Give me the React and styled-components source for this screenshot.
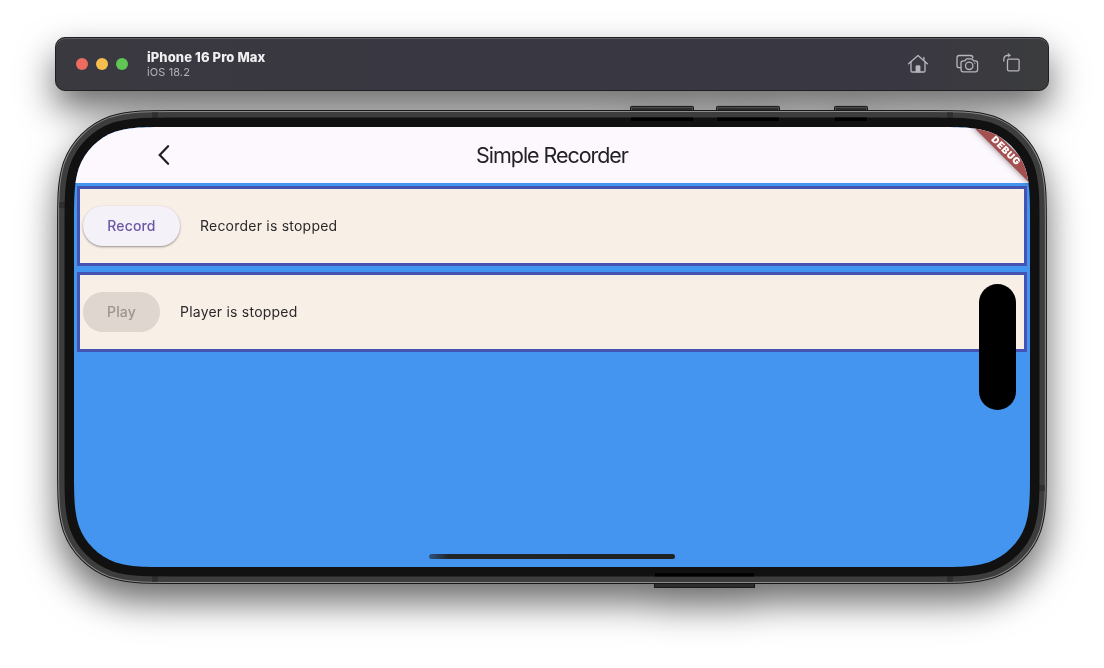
import React from "react";
import styled, { createGlobalStyle } from "styled-components";

const GlobalStyle = createGlobalStyle`
  * { box-sizing: border-box; }
  body {
    margin: 0;
    background: #fff;
    overflow: hidden;
    font-family: Inter, "Liberation Sans", sans-serif;
  }
`;

// Rounded rectangle with continuous-curvature corners.
const smoothRect = (x, y, w, h, r) => {
  const k = [1.528665, 1.08849296, 0.86840694, 0.63149379, 0.37282383, 0.16905956, 0.07491139].map((n) => n * r);
  const [a, b, c, d, e, f, g] = k;
  const R = x + w;
  const B = y + h;
  return [
    `M${x + a} ${y}`,
    `L${R - a} ${y}`,
    `C${R - b} ${y} ${R - c} ${y} ${R - d} ${y + g}`,
    `C${R - e} ${y + f} ${R - f} ${y + e} ${R - g} ${y + d}`,
    `C${R} ${y + c} ${R} ${y + b} ${R} ${y + a}`,
    `L${R} ${B - a}`,
    `C${R} ${B - b} ${R} ${B - c} ${R - g} ${B - d}`,
    `C${R - f} ${B - e} ${R - e} ${B - f} ${R - d} ${B - g}`,
    `C${R - c} ${B} ${R - b} ${B} ${R - a} ${B}`,
    `L${x + a} ${B}`,
    `C${x + b} ${B} ${x + c} ${B} ${x + d} ${B - g}`,
    `C${x + e} ${B - f} ${x + f} ${B - e} ${x + g} ${B - d}`,
    `C${x} ${B - c} ${x} ${B - b} ${x} ${B - a}`,
    `L${x} ${y + a}`,
    `C${x} ${y + b} ${x} ${y + c} ${x + g} ${y + d}`,
    `C${x + f} ${y + e} ${x + e} ${y + f} ${x + d} ${y + g}`,
    `C${x + c} ${y} ${x + b} ${y} ${x + a} ${y}Z`,
  ].join("");
};

const SCREEN_RADIUS = 65;

const Desktop = styled.main`
  width: 1104px;
  height: 668px;
  padding: 37px 55px 0;
  overflow: hidden;
`;

const SimulatorWindow = styled.div`
  display: flex;
  flex-direction: column;
  align-items: center;
  gap: 19px;
  filter: drop-shadow(0 18px 18px rgba(0, 0, 0, 0.59));
`;

const TitleBar = styled.header`
  display: flex;
  align-items: center;
  width: 994px;
  height: 54px;
  padding: 0 27px 0 21px;
  border: 1px solid #1f1f22;
  border-radius: 10px;
  background: linear-gradient(90deg, #3a3940, #393842 40%, #393842 85%, #3b3c3d);
  box-shadow: inset 0 1px 0 #5b5b60;
`;

const TrafficLights = styled.div`
  display: flex;
  gap: 8px;
  margin-left: -1px;
`;

const Light = styled.span`
  width: 12px;
  height: 12px;
  border-radius: 50%;
  background: ${(p) => p.$color};
`;

const DeviceInfo = styled.div`
  display: flex;
  flex-direction: column;
  margin-left: 19px;
  flex: 1;
`;

const DeviceName = styled.strong`
  margin-bottom: 1px;
  font-size: 13px;
  line-height: 15px;
  font-weight: 800;
  letter-spacing: 0.1px;
  color: #f0f0f2;
`;

const DeviceOs = styled.span`
  font-size: 11px;
  line-height: 13px;
  letter-spacing: 0.1px;
  color: #b4b3ba;
`;

const Tools = styled.div`
  display: flex;
  gap: 24px;
  svg { display: block; }
`;

const Phone = styled.section`
  position: relative;
  width: 990px;
  height: 474px;
  padding: 17px;
`;

const Bezel = styled.svg`
  position: absolute;
  left: 0;
  top: -6px;
  overflow: visible;
`;

const Screen = styled.div`
  position: relative;
  display: flex;
  flex-direction: column;
  width: 956px;
  height: 440px;
  background: #4495ef;
  clip-path: path("${smoothRect(0, 0, 956, 440, SCREEN_RADIUS)}");
`;

const AppBar = styled.div`
  display: grid;
  grid-template-columns: 1fr auto 1fr;
  align-items: center;
  height: 56px;
  padding: 0 82px;
  background: #fdf8fe;
`;

const AppTitle = styled.h1`
  margin: 0;
  font-size: 21.5px;
  font-weight: 400;
  line-height: 28px;
  letter-spacing: -1.05px;
  color: #232127;
  white-space: nowrap;
`;

const Panels = styled.div`
  display: flex;
  flex-direction: column;
  gap: 6px;
  padding: 3px;
`;

const Panel = styled.div`
  display: flex;
  align-items: center;
  gap: 20px;
  height: 80px;
  padding: 0 3px;
  border: 3px solid #4553b2;
  background: #f8efe6;
`;

const PillButton = styled.button`
  width: ${(p) => p.$width}px;
  height: 40px;
  padding: 0;
  border: 0;
  border-radius: 20px;
  font: 500 14px/20px Inter, "Liberation Sans", sans-serif;
  letter-spacing: 0.15px;
  color: #6a57a5;
  background: #f5f1f9;
  box-shadow: 0 1px 2px rgba(0, 0, 0, 0.3), 0 1px 3px rgba(0, 0, 0, 0.12);
  &:disabled {
    color: #9b9490;
    background: #ded6cf;
    box-shadow: none;
  }
`;

const Status = styled.span`
  font-size: 14px;
  line-height: 20px;
  letter-spacing: 0.22px;
  color: #2b292c;
  white-space: nowrap;
`;

const DebugBanner = styled.div`
  position: absolute;
  top: 0;
  right: 0;
  width: 80px;
  height: 12px;
  transform-origin: 100% 0;
  transform: rotate(45deg) translate(40px, 28px);
  background: #a4504e;
  box-shadow: 0 0 6px rgba(0, 0, 0, 0.5);
  color: #fff;
  font-size: 9.6px;
  font-weight: 900;
  line-height: 12px;
  letter-spacing: 0.7px;
  text-align: center;
`;

const DynamicIsland = styled.div`
  position: absolute;
  left: 905px;
  top: 157px;
  width: 37px;
  height: 126px;
  border-radius: 18.5px;
  background: #000;
`;

const HomeIndicator = styled.div`
  position: absolute;
  left: 355px;
  bottom: 8px;
  width: 246px;
  height: 5px;
  border-radius: 3px;
  background: linear-gradient(90deg, #2c5480, #222426 8%, #202224);
`;

const ToolIcon = styled.svg.attrs({
  fill: "none",
  stroke: "#b7b6bd",
  strokeWidth: 1.3,
  strokeLinecap: "round",
  strokeLinejoin: "round",
})`
  margin-right: ${(p) => p.$after || 0}px;
`;

const HomeIcon = () => (
  <ToolIcon width="22" height="22" viewBox="0 0 22 22" $after={3}>
    <path d="M1.6 10.8 L11 2.4 L20.4 10.8" />
    <path d="M4 9V17.8Q4 19 5.2 19H16.8Q18 19 18 17.8V9M16.9 6.8V4.3" />
    <path d="M9 18.6V12.8H13V18.6Z" fill="#b7b6bd" strokeWidth="0.8" />
  </ToolIcon>
);

const CameraIcon = () => (
  <ToolIcon width="23" height="22" viewBox="0 0 23 22">
    <path d="M4.7 14.6H3.2Q1 14.6 1 12.4V4.7Q1 2.5 3.2 2.5H14.6Q16.8 2.5 16.8 4.7" />
    <path d="M7.2 7.8H8.8L10.4 5.8H16L17.6 7.8H19.4Q21.6 7.8 21.6 10V16.6Q21.6 18.8 19.4 18.8H7.2Q5 18.8 5 16.6V10Q5 7.8 7.2 7.8Z" />
    <circle cx="13.2" cy="12.8" r="3.7" />
    <circle cx="18.7" cy="10.2" r=".65" fill="#b7b6bd" stroke="none" />
  </ToolIcon>
);

const RotateIcon = () => (
  <ToolIcon width="18" height="22" viewBox="0 0 18 22">
    <rect x="4.5" y="6.2" width="11.6" height="11.6" rx="1.4" />
    <path d="M.8 8V6.5Q.8 2.3 4.8 2.3H6" />
    <path d="M5.4 .5L7.7 2.3L5.4 4.1Z" fill="#b7b6bd" strokeWidth=".5" />
  </ToolIcon>
);

const topKeys = [
  { x: 573, w: 64 },
  { x: 659, w: 64 },
  { x: 777, w: 34 },
];

const screenOutline = smoothRect(17, 17, 956, 440, SCREEN_RADIUS);

// Each ring follows the screen outline at a constant distance.
const Ring = ({ distance, color }) => (
  <path d={screenOutline} fill={color} stroke={color} strokeWidth={distance * 2} strokeLinejoin="round" />
);

const PhoneBezel = () => (
  <Bezel width="990" height="486" viewBox="0 -6 990 486">
    {topKeys.map((key) => (
      <g key={key.x}>
        <rect x={key.x + 0.5} y="-3.6" width={key.w - 1} height="7" rx="1" fill="#2b2b2b" stroke="#151515" />
        <path d={`M${key.x + 1.5} 0V-2.4H${key.x + key.w - 1.5}V0`} fill="none" stroke="#606260" strokeWidth=".7" />
      </g>
    ))}
    <rect x="597.5" y="471" width="100" height="6.4" fill="#2d2f2e" stroke="#151515" />
    <Ring distance={16.9} color="#171717" />
    <Ring distance={15.9} color="#8b8d8a" />
    <Ring distance={14.9} color="#3d3d3d" />
    <g fill="#2f2f2f">
      <rect x="95" y="2.3" width="6" height="6" />
      <rect x="890" y="2.3" width="6" height="6" />
      <rect x="95" y="466" width="6" height="5.7" />
      <rect x="890" y="466" width="6" height="5.7" />
      <rect x="2.3" y="92" width="6" height="6" />
      <rect x="982" y="375" width="5.7" height="6" />
    </g>
    <Ring distance={9.5} color="#111" />
    {topKeys.map((key) => (
      <rect key={key.x} x={key.x + 1} y="7.5" width={key.w - 2} height="3.5" fill="#000" />
    ))}
    <rect x="598" y="463" width="99" height="3.5" fill="#000" />
  </Bezel>
);

const Chevron = styled.svg`
  display: block;
`;

const BackChevron = () => (
  <Chevron width="16" height="22" viewBox="0 0 16 22" fill="none" stroke="#1f1d22" strokeWidth="2.2" strokeLinecap="round">
    <path d="M12.1 2.2L3.7 11L12.1 19.8" />
  </Chevron>
);

export default function App() {
  return (
    <>
      <GlobalStyle />
      <Desktop>
        <SimulatorWindow>
          <TitleBar>
            <TrafficLights>
              <Light $color="#ed6b5f" />
              <Light $color="#f5be4f" />
              <Light $color="#61c554" />
            </TrafficLights>
            <DeviceInfo>
              <DeviceName>iPhone 16 Pro Max</DeviceName>
              <DeviceOs>iOS 18.2</DeviceOs>
            </DeviceInfo>
            <Tools>
              <HomeIcon />
              <CameraIcon />
              <RotateIcon />
            </Tools>
          </TitleBar>
          <Phone>
            <PhoneBezel />
            <Screen>
              <AppBar>
                <BackChevron />
                <AppTitle>Simple Recorder</AppTitle>
              </AppBar>
              <Panels>
                <Panel>
                  <PillButton $width={97}>Record</PillButton>
                  <Status>Recorder is stopped</Status>
                </Panel>
                <Panel>
                  <PillButton $width={77} disabled>Play</PillButton>
                  <Status>Player is stopped</Status>
                </Panel>
              </Panels>
              <DebugBanner>DEBUG</DebugBanner>
              <DynamicIsland />
              <HomeIndicator />
            </Screen>
          </Phone>
        </SimulatorWindow>
      </Desktop>
    </>
  );
}
